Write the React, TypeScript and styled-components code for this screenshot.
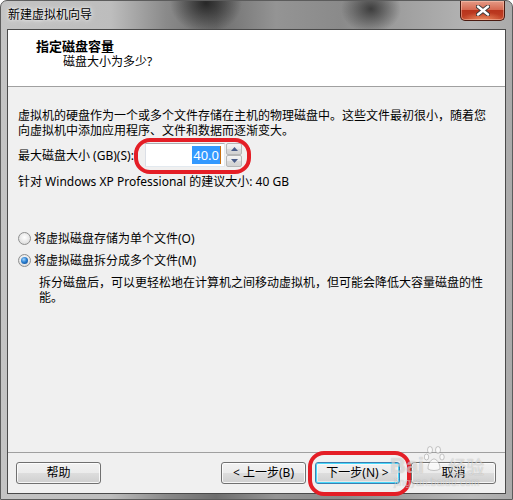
import React from "react";
import styled, { createGlobalStyle } from "styled-components";

const Global = createGlobalStyle`
  html, body { margin: 0; padding: 0; background: #fff; }
  body { font-family: "Noto Sans", "Noto Sans CJK SC", sans-serif; font-size: 12px; color: #000; }
  * { box-sizing: border-box; }
`;

const Window = styled.div`
  position: relative;
  width: 513px;
  height: 500px;
  display: flex;
  flex-direction: column;
  border-radius: 7px 7px 0 0;
  border: 1px solid #5c5c5c;
  overflow: hidden;
  background:
    radial-gradient(ellipse 36px 30px at 205px 2px, rgba(30,30,30,0.9), rgba(30,30,30,0) 100%),
    radial-gradient(ellipse 30px 24px at 370px 8px, rgba(40,40,40,0.8), rgba(40,40,40,0) 100%),
    linear-gradient(90deg, #c4c4c4 0px, #bdbdbd 110px, #8a8a8a 165px, #6e6e6e 215px, #949494 275px, #8a8a8a 340px, #a2a2a2 410px, #b4b4b4 470px, #aaaaaa 513px);
`;

const TitleBar = styled.div`
  height: 28px;
  display: flex;
  align-items: flex-start;
  padding-left: 7px;
  flex-shrink: 0;
`;

const TitleText = styled.span`
  margin-top: 6px;
  font-size: 12px;
  line-height: 16px;
  color: #000;
  text-shadow: 0 0 6px rgba(255,255,255,0.9), 0 0 3px rgba(255,255,255,0.9);
`;

const CloseButton = styled.div`
  margin-left: auto;
  margin-right: 7px;
  width: 45px;
  height: 20px;
  border: 1px solid #4b1a10;
  border-top: none;
  border-radius: 0 0 5px 5px;
  background:
    radial-gradient(ellipse 22px 8px at 50% 100%, rgba(255,170,120,0.7), rgba(255,170,120,0)),
    linear-gradient(180deg, #e49a86 0%, #d66a52 45%, #b8341c 50%, #c24428 100%);
  box-shadow: inset 0 0 0 1px rgba(255,210,190,0.45);
  display: flex;
  align-items: center;
  justify-content: center;
`;

const Client = styled.div`
  flex: 1;
  margin: 0 6px 5px 6px;
  border: 1px solid #4a4a4a;
  display: flex;
  flex-direction: column;
  background: #f0f0f0;
`;

const Header = styled.div`
  height: 57px;
  background: #fff;
  border-bottom: 1px solid #a0a0a0;
  padding-top: 9px;
  flex-shrink: 0;
`;

const HeaderTitle = styled.div`
  padding-left: 28px;
  font-size: 13px;
  font-weight: bold;
  line-height: 15px;
`;

const HeaderSub = styled.div`
  padding-left: 55px;
  line-height: 15px;
`;

const Body = styled.div`
  flex: 1;
  padding: 21px 10px 0 10px;
  display: flex;
  flex-direction: column;
`;

const Para = styled.p<{ $w?: number }>`
  margin: 0;
  line-height: 15px;
  max-width: ${(p) => (p.$w ? `${p.$w}px` : "none")};
`;

const SizeRow = styled.div`
  margin-top: 5px;
  height: 24px;
  display: flex;
  align-items: center;
`;

const Label = styled.span`
  width: 127px;
  flex-shrink: 0;
`;

const TextBox = styled.div`
  width: 80px;
  height: 24px;
  background: #fff;
  border: 1px solid #e3e9ef;
  border-top-color: #abadb3;
  border-left-color: #dbdfe6;
  display: flex;
  align-items: center;
  justify-content: flex-end;
  padding-right: 3px;
`;

const Selected = styled.span`
  background: #3399ff;
  color: #fff;
  line-height: 18px;
  padding: 0 1px 0 1px;
  font-size: 13px;
  border-right: 1px solid #c87010;
`;

const Spinner = styled.div`
  margin-left: 1px;
  width: 16px;
  height: 24px;
  display: flex;
  flex-direction: column;
`;

const SpinBtn = styled.div`
  flex: 1;
  border: 1px solid #b6b6b6;
  border-radius: 2px;
  background: linear-gradient(180deg, #f4f4f4 0%, #e8e8e8 50%, #dadada 51%, #d2d2d2 100%);
  display: flex;
  align-items: center;
  justify-content: center;
`;

const Hint = styled.div`
  margin-top: 7px;
  line-height: 15px;
`;

const RadioRow = styled.label<{ $mt: number }>`
  display: flex;
  align-items: center;
  height: 16px;
  gap: 3px;
  margin-top: ${(p) => p.$mt}px;
`;

const RadioCircle = styled.span<{ $checked?: boolean }>`
  width: 13px;
  height: 13px;
  border-radius: 50%;
  border: 1px solid #8e8f8f;
  background: radial-gradient(circle at 50% 40%, #ffffff 0%, #e6e6e6 60%, #cfcfcf 100%);
  display: flex;
  align-items: center;
  justify-content: center;
  flex-shrink: 0;
  &::after {
    content: "";
    display: ${(p) => (p.$checked ? "block" : "none")};
    width: 7px;
    height: 7px;
    border-radius: 50%;
    background: radial-gradient(circle at 40% 35%, #9fd4ff 0%, #2a7fd0 45%, #0c3f86 100%);
  }
`;

const Desc = styled.div`
  margin-top: 7px;
  padding-left: 21px;
  line-height: 15px;
  max-width: 475px;
`;

const Footer = styled.div`
  height: 41px;
  flex-shrink: 0;
  border-top: 1px solid #a0a0a0;
  padding: 9px 9px 0 8px;
  display: flex;
  align-items: flex-start;
`;

const Button = styled.button<{ $default?: boolean; $ml?: number }>`
  width: 85px;
  height: 22px;
  margin-left: ${(p) => p.$ml ?? 0}px;
  font-family: "Noto Sans", "Noto Sans CJK SC", sans-serif;
  font-size: 12px;
  color: #000;
  padding: 0;
  border-radius: 3px;
  border: 1px solid ${(p) => (p.$default ? "#3c7fb1" : "#707070")};
  background: linear-gradient(180deg, #f2f2f2 0%, #ebebeb 50%, #dddddd 51%, #cfcfcf 100%);
  box-shadow: ${(p) =>
    p.$default
      ? "inset 0 0 0 1px #48d8fb, inset 0 0 0 2px rgba(255,255,255,0.5)"
      : "inset 0 0 0 1px rgba(255,255,255,0.8)"};
  line-height: 18px;
`;

const Spacer = styled.div`
  flex: 1;
`;

const Annotation = styled.div<{ $x: number; $y: number; $w: number; $h: number }>`
  position: absolute;
  left: ${(p) => p.$x}px;
  top: ${(p) => p.$y}px;
  width: ${(p) => p.$w}px;
  height: ${(p) => p.$h}px;
  border: 4px solid #e41e26;
  border-radius: 16px;
  pointer-events: none;
`;

const Watermark = styled.div`
  position: absolute;
  left: 389px;
  top: 440px;
  width: 110px;
  pointer-events: none;
  color: rgba(255, 255, 255, 0.55);
  text-shadow: 0 0 1px rgba(0, 0, 0, 0.28);
  display: flex;
  flex-direction: column;
`;

const WmTop = styled.div`
  display: flex;
  align-items: flex-end;
  height: 34px;
`;

const WmLatin = styled.span`
  font-family: "Liberation Sans", sans-serif;
  font-weight: bold;
  font-size: 22px;
  line-height: 18px;
`;

const WmCn = styled.span`
  font-family: "Noto Sans CJK SC", sans-serif;
  font-size: 18px;
  line-height: 18px;
  margin-left: 2px;
`;

const WmUrl = styled.div`
  margin-top: 3px;
  font-family: "Liberation Sans", sans-serif;
  font-size: 10px;
  line-height: 10px;
  padding-left: 4px;
  letter-spacing: 0.3px;
`;

export default function App() {
  return (
    <>
      <Global />
      <Window>
        <TitleBar>
          <TitleText>新建虚拟机向导</TitleText>
          <CloseButton>
            <svg width="14" height="11" viewBox="0 0 14 11">
              <path
                d="M2 1.5 L12 9.5 M12 1.5 L2 9.5"
                stroke="#3a3a3a"
                strokeWidth="4.2"
                strokeLinecap="round"
              />
              <path
                d="M2 1.5 L12 9.5 M12 1.5 L2 9.5"
                stroke="#ffffff"
                strokeWidth="2.4"
                strokeLinecap="round"
              />
            </svg>
          </CloseButton>
        </TitleBar>
        <Client>
          <Header>
            <HeaderTitle>指定磁盘容量</HeaderTitle>
            <HeaderSub>磁盘大小为多少?</HeaderSub>
          </Header>
          <Body>
            <Para $w={476}>
              虚拟机的硬盘作为一个或多个文件存储在主机的物理磁盘中。这些文件最初很小，随着您向虚拟机中添加应用程序、文件和数据而逐渐变大。
            </Para>
            <SizeRow>
              <Label>最大磁盘大小 (GB)(S):</Label>
              <TextBox>
                <Selected>40.0</Selected>
              </TextBox>
              <Spinner>
                <SpinBtn>
                  <svg width="7" height="4" viewBox="0 0 7 4">
                    <path d="M0 4 L3.5 0 L7 4 Z" fill="#4a5c88" />
                  </svg>
                </SpinBtn>
                <SpinBtn>
                  <svg width="7" height="4" viewBox="0 0 7 4">
                    <path d="M0 0 L3.5 4 L7 0 Z" fill="#4a5c88" />
                  </svg>
                </SpinBtn>
              </Spinner>
            </SizeRow>
            <Hint>针对 Windows XP Professional 的建议大小: 40 GB</Hint>
            <RadioRow $mt={41}>
              <RadioCircle />
              <span>将虚拟磁盘存储为单个文件(O)</span>
            </RadioRow>
            <RadioRow $mt={6}>
              <RadioCircle $checked />
              <span>将虚拟磁盘拆分成多个文件(M)</span>
            </RadioRow>
            <Desc>
              拆分磁盘后，可以更轻松地在计算机之间移动虚拟机，但可能会降低大容量磁盘的性能。
            </Desc>
          </Body>
          <Footer>
            <Button>帮助</Button>
            <Spacer />
            <Button>&lt; 上一步(B)</Button>
            <Button $default $ml={9}>下一步(N) &gt;</Button>
            <Button $ml={11}>取消</Button>
          </Footer>
        </Client>
        <Annotation $x={133} $y={137} $w={117} $h={36} />
        <Annotation $x={307} $y={450} $w={103} $h={45} />
        <Watermark>
          <WmTop>
            <WmLatin>Bai</WmLatin>
            <svg width="22" height="30" viewBox="0 0 22 30">
              <g fill="rgba(255,255,255,0.6)" stroke="rgba(0,0,0,0.25)" strokeWidth="0.8">
                <ellipse cx="6" cy="5" rx="2.5" ry="3.5" />
                <ellipse cx="14" cy="5" rx="2.5" ry="3.5" />
                <ellipse cx="2.5" cy="12" rx="2.2" ry="3" />
                <ellipse cx="18" cy="12" rx="2.2" ry="3" />
                <path d="M4 24 C4 17 8 14 10 14 C12 14 16 17 16 24 C13 26 7 26 4 24 Z" />
              </g>
            </svg>
            <WmCn>经验</WmCn>
          </WmTop>
          <WmUrl>jingyan.baidu.com</WmUrl>
        </Watermark>
      </Window>
    </>
  );
}
